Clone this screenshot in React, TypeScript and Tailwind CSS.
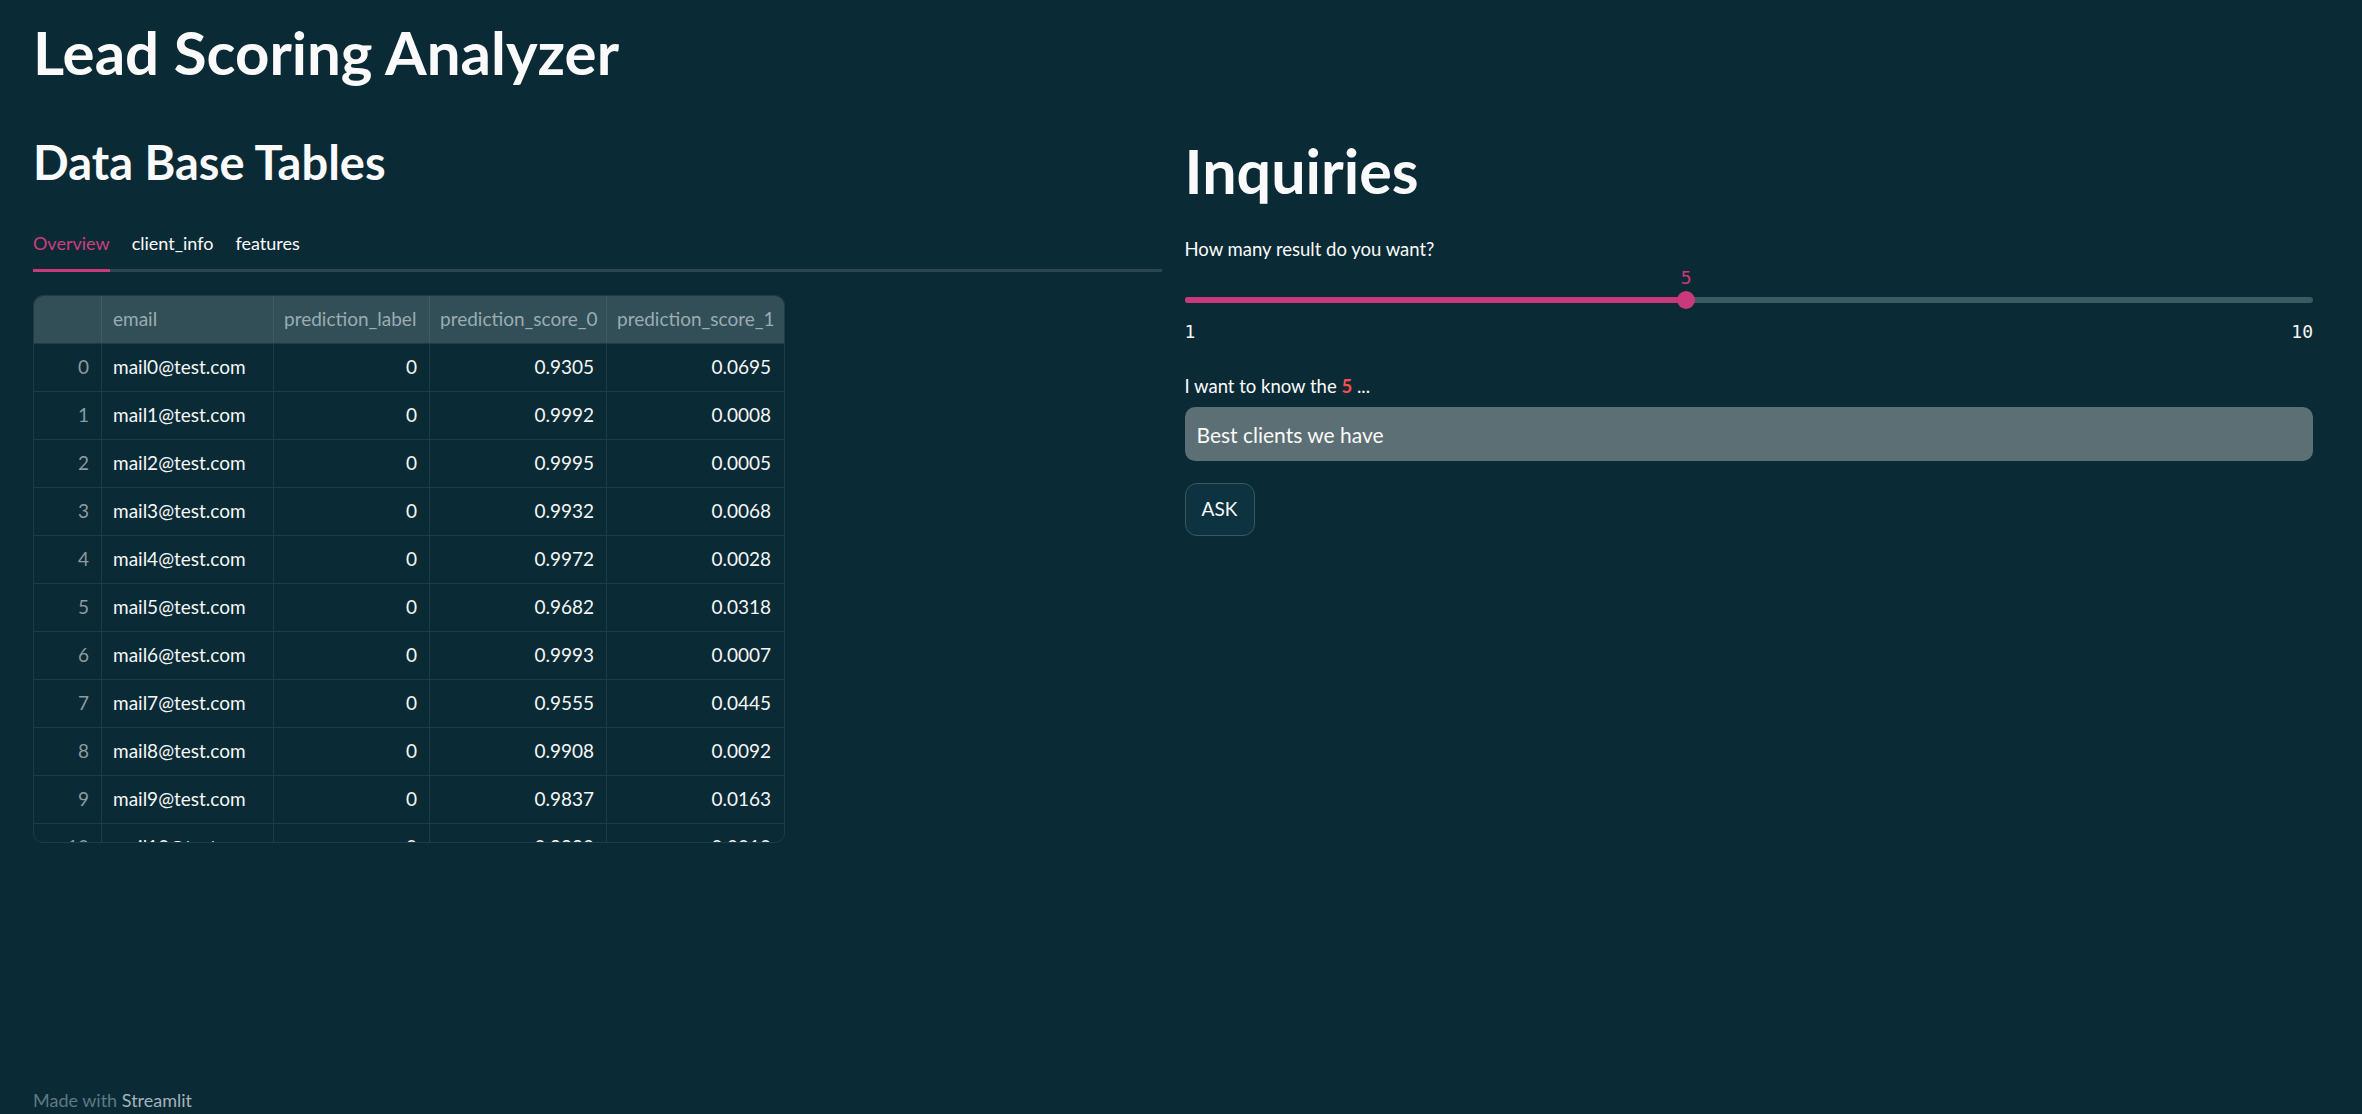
import { useState } from 'react'

const rows = [
  { email: 'mail0@test.com', label: 0, s0: '0.9305', s1: '0.0695' },
  { email: 'mail1@test.com', label: 0, s0: '0.9992', s1: '0.0008' },
  { email: 'mail2@test.com', label: 0, s0: '0.9995', s1: '0.0005' },
  { email: 'mail3@test.com', label: 0, s0: '0.9932', s1: '0.0068' },
  { email: 'mail4@test.com', label: 0, s0: '0.9972', s1: '0.0028' },
  { email: 'mail5@test.com', label: 0, s0: '0.9682', s1: '0.0318' },
  { email: 'mail6@test.com', label: 0, s0: '0.9993', s1: '0.0007' },
  { email: 'mail7@test.com', label: 0, s0: '0.9555', s1: '0.0445' },
  { email: 'mail8@test.com', label: 0, s0: '0.9908', s1: '0.0092' },
  { email: 'mail9@test.com', label: 0, s0: '0.9837', s1: '0.0163' },
  { email: 'mail10@test.com', label: 0, s0: '0.9990', s1: '0.0010' },
]

const tabs = ['Overview', 'client_info', 'features']

function DataTable() {
  return (
    <div className="w-[752px] h-[548px] overflow-hidden rounded-[10px] border border-[#1f3d47] text-[19px]">
      {/* header */}
      <div className="flex h-[48px] bg-[#324f58] text-[#9bacb2] border-b border-[#1f3d47]">
        <div className="w-[68px] border-r border-[#3f5d66]" />
        <div className="w-[172px] border-r border-[#3f5d66] flex items-center px-[11px]">email</div>
        <div className="w-[156px] border-r border-[#3f5d66] flex items-center px-[10px]">prediction_label</div>
        <div className="w-[177px] border-r border-[#3f5d66] flex items-center px-[10px]">prediction_score_0</div>
        <div className="w-[177px] flex items-center px-[10px]">prediction_score_1</div>
      </div>
      {rows.map((r, i) => (
        <div key={i} className="flex h-[48px] border-b border-[#1f3d47] text-[#f5f7f7]">
          <div className="w-[68px] border-r border-[#1f3d47] flex items-center justify-end pr-[12px] text-[#8a9ca2]">{i}</div>
          <div className="w-[172px] border-r border-[#1f3d47] flex items-center pl-[11px]">{r.email}</div>
          <div className="w-[156px] border-r border-[#1f3d47] flex items-center justify-end pr-[12px]">{r.label}</div>
          <div className="w-[177px] border-r border-[#1f3d47] flex items-center justify-end pr-[12px]">{r.s0}</div>
          <div className="w-[177px] flex items-center justify-end pr-[13px]">{r.s1}</div>
        </div>
      ))}
    </div>
  )
}

function Slider({ value, min, max }: { value: number; min: number; max: number }) {
  const pct = ((value - min) / (max - min)) * 100
  return (
    <div className="font-['DejaVu_Sans_Mono',monospace]">
      <div className="relative mt-[8px] h-[17px]">
        <span
          className="absolute top-0 -translate-x-1/2 text-[18px] leading-[17px] text-[#c9397b]"
          style={{ left: `${pct}%` }}
        >
          {value}
        </span>
      </div>
      <div className="relative mt-[11px] h-[6px] rounded-full bg-[#3d5a61]">
        <div className="h-full rounded-full bg-[#c9397b]" style={{ width: `${pct}%` }} />
        <div
          className="absolute top-[-6px] w-[18px] h-[18px] -translate-x-1/2 rounded-full bg-[#c9397b]"
          style={{ left: `${pct}%` }}
        />
      </div>
      <div className="mt-[20px] flex justify-between text-[18px] leading-[18px] text-[#f5f7f7]">
        <span>{min}</span>
        <span>{max}</span>
      </div>
    </div>
  )
}

export default function App() {
  const [active, setActive] = useState(0)
  const [count] = useState(5)
  const [query, setQuery] = useState('Best clients we have')

  return (
    <div className="min-h-[1114px] flex flex-col bg-[#0a2a35] pl-[33px] pr-[49px] pt-[18px] pb-[4px] font-['Lato',sans-serif] text-[#fafafa]">
      <h1 className="text-[60px] leading-[68px] font-bold">Lead Scoring Analyzer</h1>

      <div className="grid grid-cols-2 gap-[23px]">
        {/* Left column */}
        <div className="flex flex-col">
          <h2 className="mt-[49px] text-[47px] leading-[54px] font-bold">Data Base Tables</h2>
          <div className="mt-[42px] flex gap-[22px] border-b-[3px] border-[#2a4650] text-[18px]">
            {tabs.map((t, i) => (
              <button
                key={t}
                onClick={() => setActive(i)}
                className={`-mb-[3px] pb-[14px] leading-[24px] border-b-[3px] ${
                  active === i ? 'border-[#c9397b] text-[#d03d80]' : 'border-transparent text-[#fafafa]'
                }`}
              >
                {t}
              </button>
            ))}
          </div>
          <div className="mt-[23px]">
            <DataTable />
          </div>
        </div>

        {/* Right column */}
        <div className="flex flex-col">
          <h1 className="mt-[50px] text-[61px] leading-[70px] font-bold">Inquiries</h1>
          <p className="mt-[31px] text-[18.5px] leading-[24px]">How many result do you want?</p>
          <Slider value={count} min={1} max={10} />
          <p className="mt-[33px] text-[18.5px] leading-[24px]">
            I want to know the <span className="font-bold text-[#ff4b4b]">{count}</span> ...
          </p>
          <input
            value={query}
            onChange={(e) => setQuery(e.target.value)}
            className="mt-[9px] h-[54px] w-full rounded-[10px] bg-[#5b6f74] px-[12px] text-[21px] text-[#fafafa] outline-none"
          />
          <button className="mt-[22px] h-[53px] w-[70px] rounded-[12px] border border-[#3a5862] bg-[#0d3240] text-[19px] text-[#fafafa]">
            ASK
          </button>
        </div>
      </div>

      <footer className="mt-auto text-[18px] leading-[20px] text-[#5f7a82]">
        Made with <span className="text-[#a3b4ba]">Streamlit</span>
      </footer>
    </div>
  )
}
